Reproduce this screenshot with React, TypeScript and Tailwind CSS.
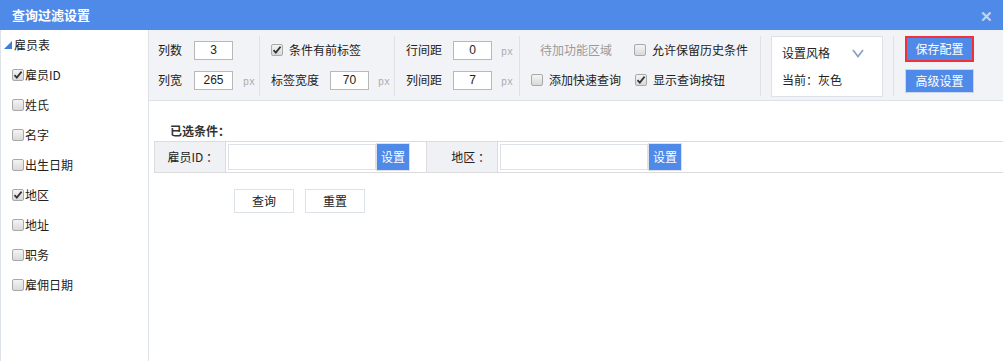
const font = { fontFamily: '"Noto Sans CJK SC", "Liberation Sans", sans-serif' };

function Box({ checked }: { checked?: boolean }) {
  return (
    <span className="relative inline-block w-[12px] h-[12px] rounded-[2px] border border-[#a9a9a9] bg-gradient-to-b from-[#f4f4f4] to-[#d9d9d9] flex-shrink-0">
      {checked && (
        <svg viewBox="0 0 12 12" className="absolute -left-[1px] -top-[1px] w-[12px] h-[12px]">
          <path d="M2.5 6.2 L4.8 8.6 L9.6 2.6" fill="none" stroke="#333" strokeWidth="1.7" />
        </svg>
      )}
    </span>
  );
}

function NumInput({ value }: { value: string }) {
  return (
    <div className="w-[39px] h-[19px] bg-white border border-[#b8b8b8] flex items-center justify-center text-[12px] text-[#222]" style={{ fontFamily: '"Liberation Sans", sans-serif' }}>
      {value}
    </div>
  );
}

const Px = () => <span className="text-[10px] text-[#aaa]" style={{ fontFamily: '"Liberation Mono", monospace' }}>px</span>;
const Sep = () => <div className="w-px h-[60px] mt-px bg-[#dde1e8]" />;

export default function App() {
  const fields = [
    { name: '雇员ID', checked: true },
    { name: '姓氏' },
    { name: '名字' },
    { name: '出生日期' },
    { name: '地区', checked: true },
    { name: '地址' },
    { name: '职务' },
    { name: '雇佣日期' },
  ];

  return (
    <div className="w-[1003px] h-[361px] bg-white flex flex-col text-[12px] text-[#222] overflow-hidden" style={font}>
      <div className="h-[30px] bg-[#4f8ae8] flex items-center justify-between pl-[12px] pr-[10px]">
        <span className="text-white font-bold text-[13px]">查询过滤设置</span>
        <span className="text-[#c9d3e2] text-[15px] font-bold leading-none">✕</span>
      </div>

      <div className="flex flex-1 min-h-0">
        {/* 左侧字段树 */}
        <div className="w-[149px] border-l border-r border-[#dde1e8]">
          <div className="h-[30px] flex items-center">
            <svg viewBox="0 0 10 10" className="w-[10px] h-[10px] ml-[2px] mr-[1px]">
              <path d="M9 1 L9 9 L1 9 Z" fill="#3d7fd9" />
            </svg>
            <span>雇员表</span>
          </div>
          {fields.map(f => (
            <div key={f.name} className="h-[30px] flex items-center pl-[11px] gap-[1px]">
              <Box checked={f.checked} />
              <span>{f.name}</span>
            </div>
          ))}
        </div>

        <div className="flex-1 flex flex-col">
          {/* 工具栏 */}
          <div className="h-[71px] bg-[#f2f3f7] border-b border-[#dde1e8] flex items-start pt-[5px]">
            <div className="w-[110px] pl-[9px]">
              <div className="h-[30px] flex items-center">
                <span className="w-[36px]">列数</span>
                <NumInput value="3" />
              </div>
              <div className="h-[30px] flex items-center">
                <span className="w-[36px]">列宽</span>
                <NumInput value="265" />
                <span className="ml-[10px]"><Px /></span>
              </div>
            </div>
            <Sep />
            <div className="w-[134px] pl-[11px]">
              <div className="h-[30px] flex items-center gap-[6px]">
                <Box checked />
                <span>条件有前标签</span>
              </div>
              <div className="h-[30px] flex items-center">
                <span className="w-[59px]">标签宽度</span>
                <NumInput value="70" />
                <span className="ml-[9px]"><Px /></span>
              </div>
            </div>
            <Sep />
            <div className="w-[124px] pl-[11px]">
              <div className="h-[30px] flex items-center">
                <span className="w-[47px]">行间距</span>
                <NumInput value="0" />
                <span className="ml-[9px]"><Px /></span>
              </div>
              <div className="h-[30px] flex items-center">
                <span className="w-[47px]">列间距</span>
                <NumInput value="7" />
                <span className="ml-[9px]"><Px /></span>
              </div>
            </div>
            <Sep />
            <div className="w-[240px] pl-[11px]">
              <div className="h-[30px] flex items-center">
                <span className="w-[103px] pl-[9px] text-[#9a9a9a]">待加功能区域</span>
                <Box />
                <span className="ml-[6px]">允许保留历史条件</span>
              </div>
              <div className="h-[30px] flex items-center">
                <div className="w-[104px] flex items-center gap-[6px]">
                  <Box />
                  <span>添加快速查询</span>
                </div>
                <Box checked />
                <span className="ml-[6px]">显示查询按钮</span>
              </div>
            </div>
            <Sep />
            <div className="ml-[10px] mt-px w-[112px] h-[61px] bg-white border border-[#dde1e8] pl-[10px] flex flex-col justify-center gap-[9px]">
              <div className="flex items-center justify-between pr-[18px]">
                <span>设置风格</span>
                <svg viewBox="0 0 12 9" className="w-[12px] h-[9px]">
                  <path d="M1 1 L6 7.5 L11 1" fill="none" stroke="#8ea3c2" strokeWidth="1.8" />
                </svg>
              </div>
              <span>当前：灰色</span>
            </div>
            <div className="ml-[10px]"><Sep /></div>
            <div className="ml-[11px] mt-px flex flex-col gap-[7px]">
              <div className="w-[69px] h-[26px] border-2 border-[#f0313b] bg-[#4f8ae8] text-white flex items-center justify-center">保存配置</div>
              <div className="w-[69px] h-[24px] border border-[#c6d6ee] bg-[#4f8ae8] text-white flex items-center justify-center">高级设置</div>
            </div>
          </div>

          {/* 已选条件 */}
          <div className="flex-1 pl-[5px] pt-[20px]">
            <div className="pl-[16px] font-bold text-[#333] h-[20px] flex items-center">已选条件：</div>
            <div className="h-[32px] border-t border-b border-[#dcdcdc] flex">
              <div className="w-[72px] bg-[#f0f1f5] border-l border-r border-[#dcdcdc] flex items-center justify-end pr-[7px]">
                雇员ID ：
              </div>
              <div className="flex items-center pl-[2px]">
                <div className="w-[148px] h-[26px] border border-[#dde1e8] bg-white" />
                <div className="w-[34px] h-[28px] bg-[#4f8ae8] border border-[#dde1e8] text-white flex items-center justify-center">设置</div>
              </div>
              <div className="w-[72px] ml-[16px] bg-[#f0f1f5] border-l border-r border-[#dcdcdc] flex items-center justify-end pr-[7px]">
                地区 ：
              </div>
              <div className="flex items-center pl-[2px]">
                <div className="w-[148px] h-[26px] border border-[#dde1e8] bg-white" />
                <div className="w-[34px] h-[28px] bg-[#4f8ae8] border border-[#dde1e8] text-white flex items-center justify-center">设置</div>
              </div>
            </div>
            <div className="flex gap-[11px] pl-[80px] mt-[16px]">
              <button className="w-[60px] h-[24px] border border-[#dde1e8] bg-white">查询</button>
              <button className="w-[60px] h-[24px] border border-[#dde1e8] bg-white">重置</button>
            </div>
          </div>
        </div>
      </div>
    </div>
  );
}
